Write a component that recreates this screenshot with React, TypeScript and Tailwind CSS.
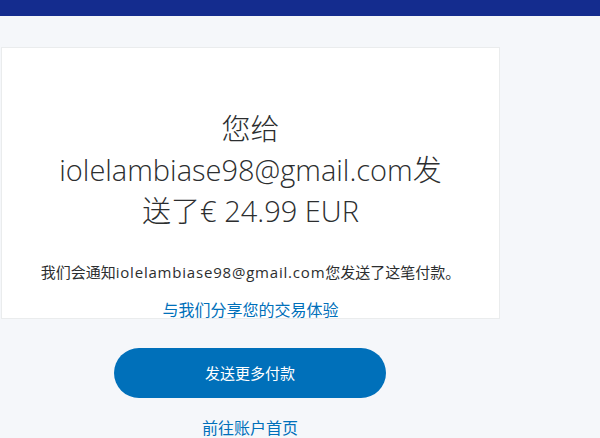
export default function App() {
  return (
    <div className="min-h-[438px] w-full bg-[#f5f7fa] font-['Open_Sans','Noto_Sans_CJK_SC',sans-serif]">
      <div className="h-4 bg-[#142c8e]" />
      <div className="w-[500px] flex flex-col items-center">
        <div className="mt-[31px] ml-[1px] w-[499px] bg-white border border-[#eaeced] flex flex-col items-center pt-[60px] pb-[0px]">
          <h1 className="text-center text-[29px] leading-[41px] font-light text-[#2c2e2f] font-['Open_Sans','Noto_Sans_CJK_SC',sans-serif] px-10">
            您给
            <br />
            iolelambiase98@gmail.com发
            <br />
            送了€ 24.99 EUR
          </h1>
          <p className="mt-[31px] text-[15px] leading-5 text-[#2c2e2f]">
            我们会通知<span className="tracking-[0.8px]">iolelambiase98@gmail.com</span>您发送了这笔付款。
          </p>
          <a className="mt-[18px] text-[16px] leading-5 text-[#0070ba] mb-[-2px]">与我们分享您的交易体验</a>
        </div>
        <button className="mt-[29px] w-[272px] h-[50px] rounded-full bg-[#0070ba] text-white text-[15px]">
          发送更多付款
        </button>
        <a className="mt-[20px] text-[16px] leading-5 text-[#0070ba]">前往账户首页</a>
      </div>
    </div>
  );
}
